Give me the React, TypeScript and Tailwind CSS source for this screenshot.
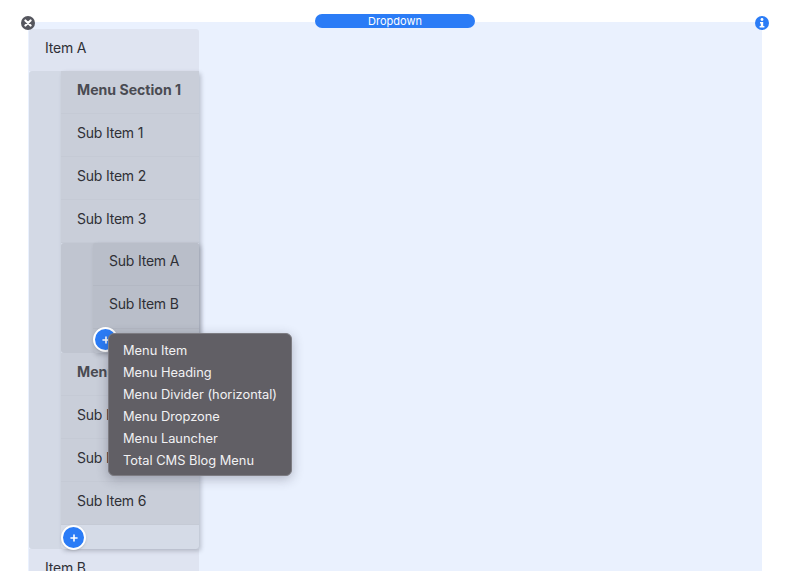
import React from "react";

const font = "font-['Inter','Liberation_Sans',sans-serif]";

function Row({ label, bold }: { label: string; bold?: boolean }) {
  return (
    <div
      className={`flex h-[43px] items-center border-b border-b-[#c5cad5] pl-4 ${bold ? "pb-1 text-[14.1px] font-bold text-[#4a4b52]" : "pb-[6px] text-[14px] tracking-[-0.015em] text-[#2f3036]"}`}
    >
      {label}
    </div>
  );
}

function AddButton() {
  return (
    <span className="flex h-[25px] w-[25px] items-center justify-center rounded-full border-2 border-white bg-[#2b7cf6] shadow-sm">
      <svg width="8" height="8" viewBox="0 0 8 8" fill="none" stroke="white" strokeWidth="1.6" strokeLinecap="round">
        <path d="M4 1v6M1 4h6" />
      </svg>
    </span>
  );
}

const popupItems = ["Menu Item", "Menu Heading", "Menu Divider (horizontal)", "Menu Dropzone", "Menu Launcher", "Total CMS Blog Menu"];

export default function App() {
  return (
    <div className={`relative h-[571px] w-[793px] overflow-hidden bg-white ${font}`}>
      <div className="relative z-10 pl-[315px] pt-[14px]">
        <div className="flex h-[14px] w-[160px] items-center justify-center rounded-full bg-[#2b7cf6] text-[11px] leading-none text-white">
          Dropdown
        </div>
      </div>

      <div className="relative -mt-[6px] ml-[28px] h-[563px] w-[734px] bg-[#eaf1fe] pl-px pt-[7px]">
        <span className="absolute -left-[7px] -top-[6px] flex h-[14px] w-[14px] items-center justify-center rounded-full bg-[#55565e]">
          <svg width="8" height="8" viewBox="0 0 8 8" stroke="white" strokeWidth="2.1" strokeLinecap="round">
            <path d="M1.4 1.4l5.2 5.2M6.6 1.4L1.4 6.6" />
          </svg>
        </span>
        <span className="absolute -right-[7px] -top-[6px] flex h-[14px] w-[14px] items-center justify-center rounded-full bg-[#2b7cf6]">
          <svg width="8" height="10" viewBox="0 0 8 10" fill="white">
            <circle cx="4" cy="1.5" r="1.4" />
            <path d="M2 4h3.2v4H6.4v1.6H1.6V8h1.2V5.5H2z" />
          </svg>
        </span>

        <div className="w-[170px]">
          <div className="flex h-[42px] items-center rounded-t-[3px] bg-[#dfe4f1] pb-[6px] pl-4 text-[14px] tracking-[-0.015em] text-[#2f3036]">Item A</div>

          <div className="flex h-[478px] justify-end rounded-[3px] bg-[#d3d9e5]">
            <div className="relative w-[138px] rounded-[3px] bg-[#d5dbe7] shadow-[2px_2px_4px_rgba(60,64,80,0.28)]">
              <div className="bg-[#c9ced9]">
                <Row label="Menu Section 1" bold />
                <Row label="Sub Item 1" />
                <Row label="Sub Item 2" />
                <Row label="Sub Item 3" />
              </div>

              <div className="flex h-[110px] justify-end rounded-[3px] bg-[#c0c5d0]">
                <div className="relative w-[106px] rounded-[3px] bg-[#b9bec9] shadow-[2px_2px_4px_rgba(60,64,80,0.28)]">
                  <div className="flex h-[43px] items-center border-b border-b-[#b3b8c3] pb-2 pl-4 text-[14px] tracking-[-0.015em] text-[#2f3036]">Sub Item A</div>
                  <div className="flex h-[43px] items-center border-b border-b-[#b3b8c3] pb-2 pl-4 text-[14px] tracking-[-0.015em] text-[#2f3036]">Sub Item B</div>
                  <div className="absolute left-0 top-[84px]">
                    <AddButton />
                  </div>
                </div>
              </div>

              <div className="bg-[#c9ced9]">
                <Row label="Menu Section 2" bold />
                <Row label="Sub Item 4" />
                <Row label="Sub Item 5" />
                <Row label="Sub Item 6" />
              </div>

              <div className="absolute left-0 top-[454px]">
                <AddButton />
              </div>
            </div>
          </div>

          <div className="flex h-[42px] items-center bg-[#dfe4f1] pb-[6px] pl-4 text-[14px] tracking-[-0.015em] text-[#2f3036]">Item B</div>
        </div>
      </div>

      <div className="absolute left-[108px] top-[333px] h-[143px] w-[184px] rounded-md border border-[#7d7c82] bg-[#615f65] pl-[14px] pt-[6px] shadow-[0_3px_12px_rgba(40,40,60,0.3)]">
        {popupItems.map((item) => (
          <div key={item} className="flex h-[22px] items-center text-[12.85px] text-[#f1f1f3]">
            {item}
          </div>
        ))}
      </div>
    </div>
  );
}
